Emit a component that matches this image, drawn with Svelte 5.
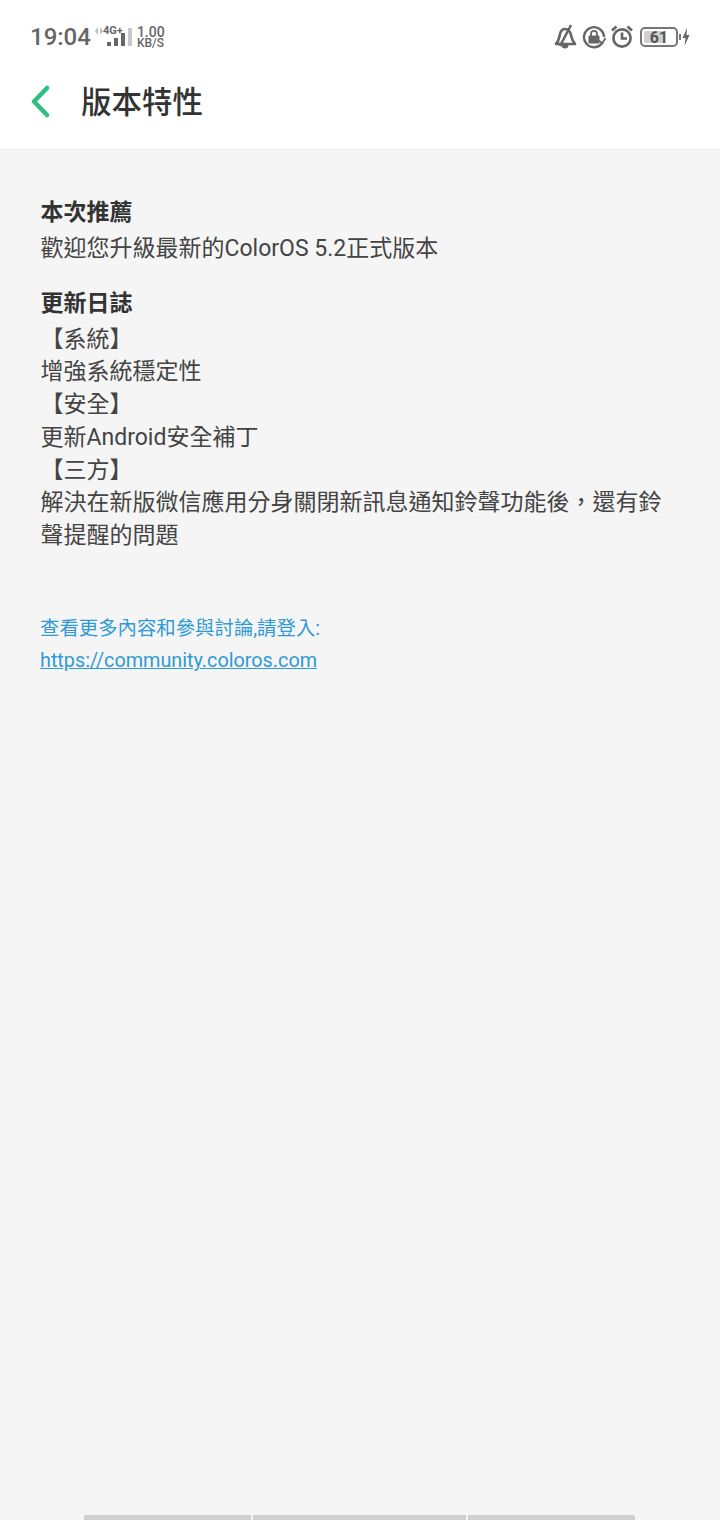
<script>
  const sections = [
    { title: '本次推薦', lines: ['歡迎您升級最新的ColorOS 5.2正式版本'] },
    {
      title: '更新日誌',
      lines: [
        '【系統】',
        '增強系統穩定性',
        '【安全】',
        '更新Android安全補丁',
        '【三方】',
        '解決在新版微信應用分身關閉新訊息通知鈴聲功能後，還有鈴聲提醒的問題'
      ]
    }
  ];
</script>

<div class="page">
  <header>
    <div class="status">
      <div class="status-left">
        <span class="time">19:04</span>
        <div class="signal">
          <span class="net">4G+</span>
          <svg class="arrows" width="8" height="8" viewBox="0 0 8 8">
            <path d="M3 0 L3 8 L0 4 Z M5 0 L5 8 L8 4 Z" fill="#bdbdbd" />
          </svg>
          <div class="bars">
            <i style="height: 4px"></i>
            <i style="height: 8px"></i>
            <i style="height: 13px"></i>
            <i class="off" style="height: 18px"></i>
          </div>
        </div>
        <div class="speed"><span>1.00</span><span>KB/S</span></div>
      </div>
      <div class="status-right">
        <svg width="24" height="26" viewBox="0 0 24 26" fill="none" stroke="#666" stroke-width="2.6">
          <path d="M2 20 C5 17 5 14 6 10 C7 6 9 5 11 5 C14 5 16 7 17 11 C18 15 18 17 21 20 Z" stroke-linejoin="round" />
          <path d="M7.5 21 a3.5 3.5 0 0 0 7 0" fill="#666" stroke="none" />
          <path d="M6 22 L17 1" />
        </svg>
        <svg width="24" height="24" viewBox="0 0 24 24" fill="none" stroke="#666" stroke-width="2.4">
          <path d="M20.5 17.5 A10 10 0 1 1 22 12" />
          <path d="M23.5 13 L20.5 18 L16.5 15.5" stroke-width="1.8" />
          <rect x="6.5" y="10.5" width="11" height="8" rx="1" fill="#666" stroke="none" />
          <path d="M9 11 V8.8 a3 3 0 0 1 6 0 V11" stroke-width="1.8" />
        </svg>
        <svg width="24" height="26" viewBox="0 0 24 26" fill="none" stroke="#666" stroke-width="2.7">
          <circle cx="12" cy="14" r="8.6" />
          <path d="M12 8.5 V14.5 H17" />
          <path d="M2 6.5 L6.5 2.5 M22 6.5 L17.5 2.5" />
        </svg>
        <div class="battery">
          <div class="battery-body">
            <div class="battery-fill"></div>
            <span>61</span>
          </div>
          <div class="battery-tip"></div>
          <svg width="8" height="18" viewBox="0 0 8 18">
            <path d="M5 0 L0.5 10 H3.5 L2.5 18 L7.5 7 H4.5 Z" fill="#666" />
          </svg>
        </div>
      </div>
    </div>
    <div class="toolbar">
      <svg class="back" width="22" height="36" viewBox="0 0 22 36" fill="none">
        <path d="M17 4 L4 17.5 L17 31" stroke="#2fbf85" stroke-width="4.6" stroke-linecap="round" stroke-linejoin="round" />
      </svg>
      <h1>版本特性</h1>
    </div>
  </header>

  <main>
    {#each sections as section}
      <section>
        <h2>{section.title}</h2>
        {#each section.lines as line}
          <p>{line}</p>
        {/each}
      </section>
    {/each}

    <div class="more">
      <p>查看更多內容和參與討論,請登入:</p>
      <a href="#top">https://community.coloros.com</a>
    </div>
  </main>

  <div class="scroll-hint">
    <i class="first"></i>
    <i class="second"></i>
    <i class="third"></i>
  </div>
</div>

<style>
  :global(body) {
    margin: 0;
    background: #f5f5f5;
  }
  .page {
    height: 1520px;
    display: flex;
    flex-direction: column;
    overflow: hidden;
    background: #f5f5f5;
    font-family: Roboto, "Noto Sans CJK TC", sans-serif;
  }
  header {
    height: 150px;
    box-sizing: border-box;
    background: #fff;
    border-bottom: 1px solid #ececec;
  }
  .status {
    height: 72px;
    box-sizing: border-box;
    padding: 2px 30px 0 30px;
    display: flex;
    align-items: center;
    justify-content: space-between;
    color: #666;
  }
  .status-left {
    display: flex;
    align-items: center;
  }
  .time {
    font-size: 24px;
    font-weight: 500;
  }
  .signal {
    position: relative;
    width: 36px;
    height: 20px;
    margin-left: 4px;
  }
  .arrows {
    position: absolute;
    left: 0;
    top: 0;
  }
  .net {
    position: absolute;
    left: 8px;
    top: -2px;
    font-size: 11px;
    line-height: 11px;
    font-weight: 700;
  }
  .bars {
    position: absolute;
    left: 12px;
    bottom: 1px;
    display: flex;
    align-items: flex-end;
    gap: 3px;
  }
  .bars i {
    display: block;
    width: 4px;
    background: #666;
  }
  .bars i.off {
    background: #c8c8c8;
  }
  .speed {
    display: flex;
    flex-direction: column;
    margin-left: 6px;
    font-size: 12px;
    line-height: 10px;
    font-weight: 500;
  }
  .speed span:first-child {
    font-size: 14px;
    line-height: 11px;
  }
  .status-right {
    display: flex;
    align-items: center;
    gap: 4px;
  }
  .battery {
    display: flex;
    align-items: center;
    margin-left: 2px;
  }
  .battery-body {
    position: relative;
    width: 38px;
    height: 20px;
    box-sizing: border-box;
    border: 2px solid #777;
    border-radius: 5px;
    display: flex;
    align-items: center;
    justify-content: center;
  }
  .battery-fill {
    position: absolute;
    left: 2px;
    top: 2px;
    bottom: 2px;
    width: 61%;
    background: #cfcfcf;
    border-radius: 2px;
  }
  .battery-body span {
    position: relative;
    font-size: 16px;
    font-weight: 700;
    color: #555;
  }
  .battery-tip {
    width: 2px;
    height: 6px;
    margin: 0 1px 0 1px;
    background: #777;
  }
  .toolbar {
    display: flex;
    align-items: center;
    height: 60px;
    padding-left: 30px;
  }
  .back {
    flex: none;
  }
  h1 {
    margin: 2px 0 0 29px;
    font-size: 30.5px;
    line-height: 60px;
    font-weight: 500;
    color: #333;
  }
  main {
    flex: 1;
    padding: 45px 40px 0 40.5px;
  }
  section {
    margin-bottom: 20px;
  }
  h2 {
    margin: 0 0 2px;
    font-size: 23px;
    line-height: 36px;
    font-weight: 700;
    color: #333;
  }
  section p {
    margin: 0;
    font-size: 23px;
    line-height: 32.7px;
    color: #444;
  }
  .more {
    margin-top: 60px;
    margin-left: -0.5px;
    font-size: 19.4px;
    line-height: 32.5px;
    color: #2f9ad6;
  }
  .more p {
    margin: 0;
  }
  .more a {
    color: inherit;
    font-size: 19.8px;
    text-decoration: underline;
    display: block;
  }
  .scroll-hint {
    height: 5px;
    display: flex;
    gap: 2px;
    padding-left: 84px;
  }
  .scroll-hint i {
    display: block;
    height: 5px;
    background: #cfcfcf;
  }
  .first {
    width: 167px;
    border-radius: 2px 0 0 0;
  }
  .second {
    width: 213px;
  }
  .third {
    width: 167px;
    border-radius: 0 2px 0 0;
  }
</style>
